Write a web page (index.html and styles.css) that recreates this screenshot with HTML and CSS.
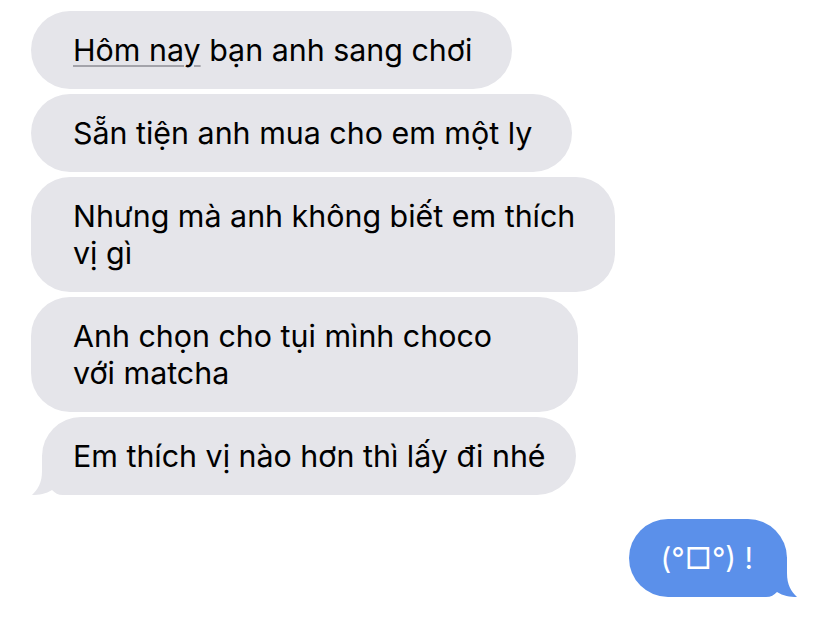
FILE: index.html
```html
<!DOCTYPE html>
<html>
    <head>
        <meta http-equiv="Content-Type" content="text/html; charset=utf-8">
        <title>Tin nhắn</title>
        <link rel="stylesheet" href="styles.css">
    </head>
    <body>
        <div class="thread">
            <div class="msg in"><span class="link">Hôm nay</span> bạn anh sang chơi</div>
            <div class="msg in">Sẵn tiện anh mua cho em một ly</div>
            <div class="msg in">Nhưng mà anh không biết em thích<br>vị gì</div>
            <div class="msg in loose">Anh chọn cho tụi mình choco<br>với matcha</div>
            <div class="msg in last">
                Em thích vị nào hơn thì lấy đi nhé
                <svg class="tail" viewBox="0 0 50 40" width="50" height="40">
                    <path d="M11 0 H50 V40 H32 C27 40 24 38 21 35 C15 39 8 40 1 40 C7 34 11 28 11 16 Z" fill="#e5e5ea"/>
                </svg>
            </div>
            <div class="msg out last">
                (°□°) !
                <svg class="tail" viewBox="0 0 50 40" width="50" height="40">
                    <path d="M39 0 H0 V40 H18 C23 40 26 38 29 35 C35 39 42 40 49 40 C43 34 39 28 39 16 Z" fill="#5b90ea"/>
                </svg>
            </div>
        </div>
    </body>
</html>
```

FILE: styles.css
```css
body {
    margin: 0;
    background: #fff;
    font-family: "Inter", "DejaVu Sans", sans-serif;
}

.thread {
    display: flex;
    flex-direction: column;
    align-items: flex-start;
    gap: 5px;
    padding: 11px 41px 0 31px;
}

.msg {
    position: relative;
    isolation: isolate;
    font-size: 30.4px;
    line-height: 37px;
    padding: 21px 40px 20px 42px;
    border-radius: 39px;
    white-space: nowrap;
}

.in {
    color: #000;
    background: #e5e5ea;
}

.in.loose {
    padding-right: 86px;
}

.out {
    align-self: flex-end;
    margin-top: 19px;
    padding: 21px 34px 20px 32px;
    font-size: 29.6px;
    color: #fff;
    background: #5b90ea;
}

.in.last {
    margin-left: 11px;
    padding-left: 31px;
    padding-right: 30px;
}

.tail {
    position: absolute;
    bottom: 0;
    z-index: -1;
}

.in .tail {
    left: -11px;
}

.out .tail {
    right: -11px;
}

.link {
    text-decoration: underline;
    text-decoration-color: #a3a3aa;
    text-decoration-thickness: 2px;
    text-underline-offset: 4px;
}
```
